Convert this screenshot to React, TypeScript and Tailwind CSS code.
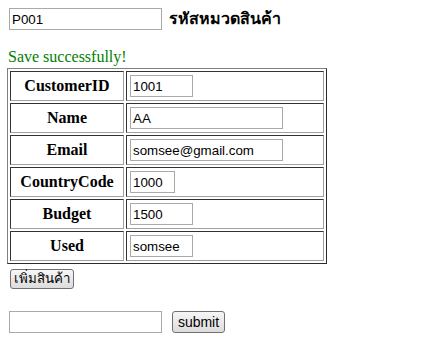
import { useState } from "react";

const rows: { label: string; value: string; w: string }[] = [
  { label: "CustomerID", value: "1001", w: "w-[63px]" },
  { label: "Name", value: "AA", w: "w-[153px]" },
  { label: "Email", value: "somsee@gmail.com", w: "w-[153px]" },
  { label: "CountryCode", value: "1000", w: "w-[45px]" },
  { label: "Budget", value: "1500", w: "w-[63px]" },
  { label: "Used", value: "somsee", w: "w-[63px]" },
];

const inp =
  "h-[22px] border border-[#a9a9a9] bg-white px-[2px] text-[13.33px] text-black font-['Liberation_Sans',Tahoma,sans-serif] outline-none";
const btn =
  "rounded-[3px] border border-[#707070] bg-gradient-to-b from-[#f6f6f6] to-[#dcdcdc] text-[13.33px] text-black leading-none font-['Liberation_Sans','DejaVu_Sans',Tahoma,sans-serif]";

export default function App() {
  const [code, setCode] = useState("P001");
  const [vals, setVals] = useState(rows.map((r) => r.value));
  const [q, setQ] = useState("");

  return (
    <div className="min-h-[355px] bg-white p-[8px] font-['Liberation_Serif',serif] text-[16px] text-black">
      <div className="flex items-center h-[22px] pl-[1px]">
        <input value={code} onChange={(e) => setCode(e.target.value)} className={inp + " w-[153px]"} />
        <span className="ml-[7px] font-semibold text-[16px] font-['Liberation_Sans','DejaVu_Sans','Noto_Sans',sans-serif]">รหัสหมวดสินค้า</span>
      </div>

      <div className="mt-[18px] leading-[18px] text-[#008000]">Save successfully!</div>

      <table className="mt-[2px] ml-[-1px] border-separate border-spacing-[2px] border border-[#808080] border-r-[#2b2b2b] border-b-[#2b2b2b]">
        <tbody>
          {rows.map((r, i) => (
            <tr key={r.label}>
              <td className="w-[114px] h-[30px] p-[1px] border border-[#a0a0a0] border-t-[#333] border-l-[#333] text-center font-bold align-middle">
                {r.label}
              </td>
              <td className="w-[198px] h-[30px] p-[1px] border border-[#a0a0a0] border-t-[#333] border-l-[#333] align-middle">
                <div className="flex items-center h-[26px] pl-[2px]">
                  <input
                    value={vals[i]}
                    onChange={(e) => setVals((s) => s.map((v, j) => (j === i ? e.target.value : v)))}
                    className={inp + " " + r.w}
                  />
                </div>
              </td>
            </tr>
          ))}
        </tbody>
      </table>

      <button className={btn + " mt-[5px] ml-[2px] h-[20px] w-[64px]"}>เพิ่มสินค้า</button>

      <div className="flex items-center mt-[21px] pl-[1px]">
        <input value={q} onChange={(e) => setQ(e.target.value)} className={inp + " w-[153px]"} />
        <button className={btn + " ml-[10px] h-[22px] w-[53px] text-[14px]"}>submit</button>
      </div>
    </div>
  );
}
